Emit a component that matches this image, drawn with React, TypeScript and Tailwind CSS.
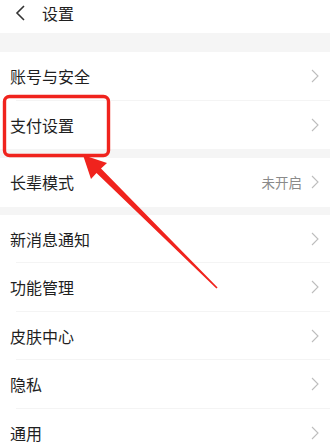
import React from 'react';

const Chevron = () => (
    <svg width="8" height="14" viewBox="0 0 8 14" fill="none">
        <path d="M1 1l6 6-6 6" stroke="#bdbdbd" strokeWidth="1.1" />
    </svg>
);

type RowProps = { label: string; value?: string; divider?: boolean };

const Row = ({ label, value, divider }: RowProps) => (
    <div className="relative bg-white h-[48.5px] flex items-center justify-between pl-[10px] pr-[11px]">
        <span className="text-[16px] text-[#1f1f1f]">{label}</span>
        <div className="flex items-center gap-[9px]">
            {value && <span className="text-[13.5px] text-[#8a8a8a]">{value}</span>}
            <Chevron />
        </div>
        {divider && <div className="absolute left-[16px] right-0 bottom-0 h-px bg-[#f4f4f4]" />}
    </div>
);

export default function App() {
    return (
        <div
            className="relative w-[330px] h-[447px] overflow-hidden bg-[#f5f5f5]"
            style={{ fontFamily: '"Noto Sans CJK SC", "Noto Sans", sans-serif' }}
        >
            <div className="h-[33px] bg-white flex items-center pl-[14px] pb-[7px]">
                <svg width="13" height="16" viewBox="0 0 13 16" fill="none">
                    <path d="M10 1L3 8l7 7" stroke="#333" strokeWidth="1.6" />
                </svg>
                <span className="ml-[15px] text-[16px] text-[#1f1f1f]">设置</span>
            </div>
            <div className="h-[19px]" />

            <Row label="账号与安全" divider />
            <Row label="支付设置" />
            <div className="h-[9px]" />
            <Row label="长辈模式" value="未开启" />
            <div className="h-[8px]" />
            <Row label="新消息通知" divider />
            <Row label="功能管理" divider />
            <Row label="皮肤中心" divider />
            <Row label="隐私" divider />
            <Row label="通用" />

            {/* annotation overlay */}
            <svg className="absolute inset-0 pointer-events-none" width="330" height="447" viewBox="0 0 330 447">
                <rect x="4.5" y="96.5" width="104" height="59" rx="5" fill="none" stroke="#f0231d" strokeWidth="3.4" />
                <polygon
                    points="83,155 107,163 101,168.5 217.6,287.4 216.4,288.6 96.5,173 91,179"
                    fill="#f0231d"
                />
            </svg>
        </div>
    );
}
